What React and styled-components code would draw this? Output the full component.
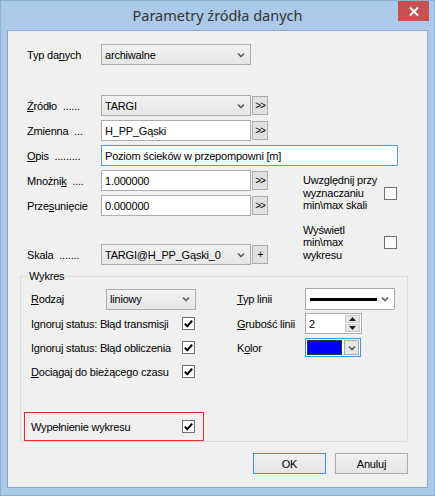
import React from 'react';
import styled, { createGlobalStyle } from 'styled-components';

const Global = createGlobalStyle`
  html, body { margin: 0; padding: 0; background: #fff; }
  body {
    font-family: "Liberation Sans", Arial, sans-serif;
    font-size: 11px;
    letter-spacing: -0.2px;
    color: #000;
  }
`;

const Window = styled.div`
  width: 435px;
  height: 496px;
  box-sizing: border-box;
  background: #abc9e9;
  border: 1px solid #90b0d8;
  display: flex;
  flex-direction: column;
`;

const TitleBar = styled.div`
  height: 29px;
  display: grid;
  grid-template-columns: 1fr auto 1fr;
  align-items: start;
`;

const Title = styled.div`
  grid-column: 2;
  font-family: "Noto Sans", "Open Sans", sans-serif;
  font-size: 14.5px;
  letter-spacing: 0;
  line-height: 29px;
  color: #333;
`;

const Close = styled.div`
  justify-self: end;
  width: 31px;
  height: 20px;
  margin-right: 5px;
  background: #c75050;
  display: flex;
  align-items: center;
  justify-content: center;
`;

const Client = styled.div`
  flex: 1;
  margin: 0 6px 7px;
  border: 1px solid #8aa6cb;
  background: #f0f0f0;
  padding: 13px 19px 11px 12px;
  display: flex;
  flex-direction: column;
`;

const TopGrid = styled.div`
  margin-left: 7px;
  display: grid;
  grid-template-columns: 73px 150px 16px 129px;
  grid-template-rows: 21px 22px 21px 21px 21px 21px 21px 20px 21px;
  column-gap: 1px;
  row-gap: 4px;
  align-items: center;
`;

const Label = styled.div`
  white-space: pre;
  grid-column: ${(p) => p.$col || 'auto'};
  grid-row: ${(p) => p.$row || 'auto'};
`;

const Cell = styled.div`
  grid-column: ${(p) => p.$col || 'auto'};
  grid-row: ${(p) => p.$row || 'auto'};
  display: flex;
  height: 100%;
  align-items: center;
`;

const ComboBox = styled.div`
  box-sizing: border-box;
  width: ${(p) => p.$w}px;
  height: ${(p) => p.$h || 21}px;
  border: 1px solid #acacac;
  background: ${(p) => (p.$white ? '#fff' : 'linear-gradient(#f2f2f2, #e6e6e6)')};
  display: flex;
  align-items: center;
  padding: 0 5px 0 3px;
  gap: 4px;
`;

const ComboText = styled.span`
  flex: 1;
  white-space: nowrap;
  overflow: hidden;
`;

const TextBox = styled.div`
  box-sizing: border-box;
  width: ${(p) => (p.$w ? `${p.$w}px` : '100%')};
  height: ${(p) => p.$h || 21}px;
  border: 1px solid ${(p) => (p.$focus ? '#569de5' : '#abadb3')};
  background: #fff;
  display: flex;
  align-items: center;
  padding-left: 3px;
  white-space: nowrap;
`;

const SmallButton = styled.div`
  box-sizing: border-box;
  width: 16px;
  height: 19px;
  border: 1px solid #adadad;
  background: #e1e1e1;
  display: flex;
  align-items: center;
  justify-content: center;
  font-size: 10px;
  letter-spacing: -1px;
`;

const SideOption = styled.div`
  grid-column: 4;
  grid-row: ${(p) => p.$row};
  display: flex;
  align-items: center;
  padding-left: 34px;
  height: 100%;
`;

const SideText = styled.div`
  width: 81px;
  line-height: 12.5px;
  white-space: pre;
`;

const Box = styled.div`
  box-sizing: border-box;
  width: 13px;
  height: 13px;
  border: 1px solid #707070;
  background: #fff;
  display: flex;
  align-items: center;
  justify-content: center;
`;

const Group = styled.fieldset`
  margin: 5px 0 0;
  padding: 5px 0 0 3px;
  border: 1px solid #dcdcdc;
  min-width: 0;
`;

const Legend = styled.legend`
  margin-left: 4px;
  padding: 0 1px;
  line-height: 13px;
`;

const GroupGrid = styled.div`
  margin-left: 7px;
  display: grid;
  grid-template-columns: 75px 76px 55px 68px 90px;
  grid-template-rows: 22px 21px 21px 21px;
  row-gap: 3px;
  align-items: center;
`;

const Highlight = styled.div`
  box-sizing: border-box;
  margin-top: 30px;
  width: 180px;
  height: 29px;
  border: 1px solid #ee2a2a;
  padding-left: 6px;
  display: grid;
  grid-template-columns: 151px auto;
  align-items: center;
`;

const LineSample = styled.div`
  flex: 1;
  height: 3px;
  background: #000;
  margin-left: 1px;
`;

const Spin = styled.div`
  box-sizing: border-box;
  width: 57px;
  height: 21px;
  border: 1px solid #abadb3;
  background: #fff;
  display: flex;
  padding: 1px;
`;

const SpinText = styled.div`
  flex: 1;
  display: flex;
  align-items: center;
  padding-left: 2px;
`;

const SpinButtons = styled.div`
  width: 15px;
  display: flex;
  flex-direction: column;
  gap: 1px;
`;

const SpinButton = styled.div`
  flex: 1;
  background: #e6e6e6;
  border: 1px solid #c8c8c8;
  display: flex;
  align-items: center;
  justify-content: center;
`;

const ColorPicker = styled.div`
  box-sizing: border-box;
  width: 56px;
  height: 19px;
  border: 1px solid #3399ff;
  padding: 1px;
  display: flex;
  gap: 2px;
  background: #fff;
`;

const Swatch = styled.div`
  flex: 1;
  border: 1px solid #333;
  background: ${(p) => p.$color};
`;

const ColorDrop = styled.div`
  box-sizing: border-box;
  width: 15px;
  border: 1px solid #acacac;
  background: #e6e6e6;
  display: flex;
  align-items: center;
  justify-content: center;
`;

const Footer = styled.div`
  margin-top: 11px;
  display: flex;
  justify-content: flex-end;
  gap: 9px;
`;

const Button = styled.div`
  box-sizing: border-box;
  width: 73px;
  height: 21px;
  border: 1px solid ${(p) => (p.$default ? '#3399ff' : '#acacac')};
  background: linear-gradient(#f0f0f0, #e5e5e5);
  display: flex;
  align-items: center;
  justify-content: center;
`;

const Chevron = () => (
  <svg width="8" height="6" viewBox="0 0 8 6">
    <path d="M1 1.5 L4 4.5 L7 1.5" fill="none" stroke="#5f5f5f" strokeWidth="1.6" />
  </svg>
);

const Check = () => (
  <svg width="11" height="11" viewBox="0 0 11 11">
    <path d="M1.8 5.6 L4.3 8.2 L9.2 2.6" fill="none" stroke="#000" strokeWidth="2" />
  </svg>
);

const Arrow = ({ up }) => (
  <svg width="7" height="4" viewBox="0 0 7 4">
    <path d={up ? 'M0 4 L3.5 0 L7 4 Z' : 'M0 0 L3.5 4 L7 0 Z'} fill="#222" />
  </svg>
);

const Combo = ({ w, h, white, children }) => (
  <ComboBox $w={w} $h={h} $white={white}>
    {typeof children === 'string' ? <ComboText>{children}</ComboText> : children}
    <Chevron />
  </ComboBox>
);

const CheckBox = ({ checked }) => <Box>{checked && <Check />}</Box>;

const Dots = () => <SmallButton>&gt;&gt;</SmallButton>;

export default function App() {
  return (
    <>
      <Global />
      <Window>
        <TitleBar>
          <Title>Parametry źródła danych</Title>
          <Close>
            <svg width="10" height="9" viewBox="0 0 10 9">
              <path d="M1 0.5 L9 8.5 M9 0.5 L1 8.5" stroke="#fff" strokeWidth="2" />
            </svg>
          </Close>
        </TitleBar>
        <Client>
          <TopGrid>
            <Label $row={1}>Typ da<u>n</u>ych</Label>
            <Cell $row={1} $col="2 / 4">
              <Combo w={150}>archiwalne</Combo>
            </Cell>

            <Label $row={3}><u>Ź</u>ródło  ......</Label>
            <Cell $row={3} $col={2}><Combo w={150}>TARGI</Combo></Cell>
            <Cell $row={3} $col={3}><Dots /></Cell>

            <Label $row={4}>Zmienna  ...</Label>
            <Cell $row={4} $col={2}><TextBox $w={150}>H_PP_Gąski</TextBox></Cell>
            <Cell $row={4} $col={3}><Dots /></Cell>

            <Label $row={5}><u>O</u>pis  .........</Label>
            <Cell $row={5} $col="2 / 5">
              <TextBox $focus>Poziom ścieków w przepompowni [m]</TextBox>
            </Cell>

            <Label $row={6}>Mnożni<u>k</u>  ....</Label>
            <Cell $row={6} $col={2}><TextBox $w={150}>1.000000</TextBox></Cell>
            <Cell $row={6} $col={3}><Dots /></Cell>

            <Label $row={7}>Prze<u>s</u>unięcie</Label>
            <Cell $row={7} $col={2}><TextBox $w={150}>0.000000</TextBox></Cell>
            <Cell $row={7} $col={3}><Dots /></Cell>

            <SideOption $row="6 / 8">
              <SideText>{'Uwzględnij przy\nwyznaczaniu\nmin\\max skali'}</SideText>
              <CheckBox />
            </SideOption>

            <SideOption $row="8 / 10">
              <SideText>{'Wyświetl\nmin\\max\nwykresu'}</SideText>
              <CheckBox />
            </SideOption>

            <Label $row={9}>Skala  .......</Label>
            <Cell $row={9} $col={2}><Combo w={150}>TARGI@H_PP_Gąski_0</Combo></Cell>
            <Cell $row={9} $col={3}><SmallButton>+</SmallButton></Cell>
          </TopGrid>

          <Group>
            <Legend>Wykres</Legend>
            <GroupGrid>
              <Label $row={1} $col={1}><u>R</u>odzaj</Label>
              <Cell $row={1} $col="2 / 4"><Combo w={90}>liniowy</Combo></Cell>
              <Label $row={1} $col={4}><u>T</u>yp linii</Label>
              <Cell $row={1} $col={5}>
                <Combo w={90} h={22} white>
                  <LineSample />
                </Combo>
              </Cell>

              <Label $row={2} $col="1 / 3">Ignoruj status: Błąd transmisji</Label>
              <Cell $row={2} $col={3}><CheckBox checked /></Cell>
              <Label $row={2} $col={4}><u>G</u>rubość linii</Label>
              <Cell $row={2} $col={5}>
                <Spin>
                  <SpinText>2</SpinText>
                  <SpinButtons>
                    <SpinButton><Arrow up /></SpinButton>
                    <SpinButton><Arrow /></SpinButton>
                  </SpinButtons>
                </Spin>
              </Cell>

              <Label $row={3} $col="1 / 3">Ignoruj status: Błąd obliczenia</Label>
              <Cell $row={3} $col={3}><CheckBox checked /></Cell>
              <Label $row={3} $col={4}>K<u>o</u>lor</Label>
              <Cell $row={3} $col={5}>
                <ColorPicker>
                  <Swatch $color="#0000ff" />
                  <ColorDrop><Chevron /></ColorDrop>
                </ColorPicker>
              </Cell>

              <Label $row={4} $col="1 / 3"><u>D</u>ociągaj do bieżącego czasu</Label>
              <Cell $row={4} $col={3}><CheckBox checked /></Cell>
            </GroupGrid>
            <Highlight>
              <Label>Wypełnienie wykresu</Label>
              <CheckBox checked />
            </Highlight>
          </Group>

          <Footer>
            <Button $default>OK</Button>
            <Button>Anuluj</Button>
          </Footer>
        </Client>
      </Window>
    </>
  );
}
